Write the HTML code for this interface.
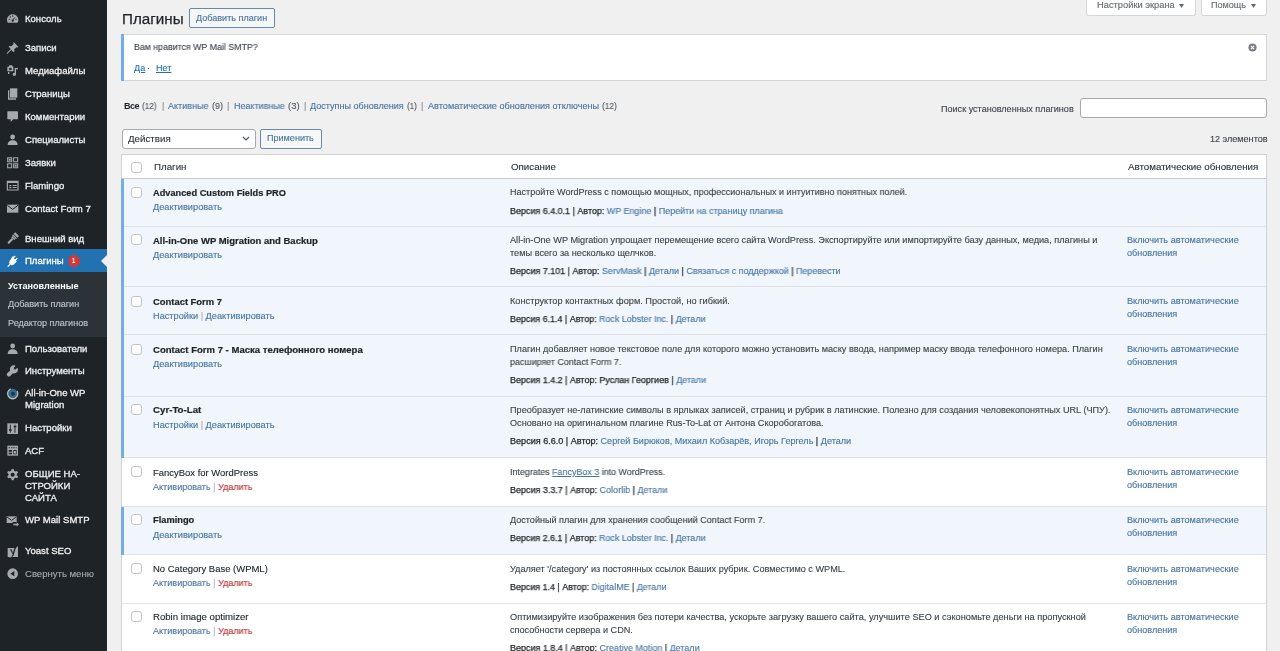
<!DOCTYPE html>
<html><head><meta charset="utf-8"><style>
html,body{margin:0;padding:0;width:1280px;height:651px;overflow:hidden;background:#f0f0f1;}
body{position:relative;font-family:"Liberation Sans",sans-serif;}
.t{position:absolute;white-space:nowrap;will-change:transform;}
a{color:#46739f;text-decoration:none;}
.v{-webkit-text-stroke:0.25px #1d2327;}
.v a{-webkit-text-stroke:0.12px #46739f;}
</style></head><body>
<div style="position:absolute;left:0px;top:0px;width:107px;height:651px;background:#1d2327"></div>
<div style="position:absolute;left:0px;top:249px;width:107px;height:23px;background:#2271b1"></div>
<div style="position:absolute;left:0px;top:272px;width:107px;height:65px;background:#2c3338"></div>
<div style="position:absolute;left:101px;top:255px;width:0;height:0;border-top:6px solid transparent;border-bottom:6px solid transparent;border-right:6px solid #f0f0f1"></div>
<div class="t" style="left:24.50px;top:12.60px;font-size:9.55px;line-height:10.982px;color:#f0f0f1;font-weight:400;-webkit-text-stroke:0.3px currentColor;">Консоль</div>
<svg style="position:absolute;left:5.53px;top:11.73px" width="13.33" height="13.33" viewBox="0 0 20 20"><path fill="#a7aaad" d="M10 3.5C5.3 3.5 1.5 7.3 1.5 12c0 1.6.4 3 1.2 4.3h14.6c.8-1.3 1.2-2.7 1.2-4.3 0-4.7-3.8-8.5-8.5-8.5z"/><circle cx="10" cy="13" r="1.6" fill="#1d2327"/><path d="M10 13 L13 8" stroke="#1d2327" stroke-width="1.3"/><circle cx="5" cy="11" r="1" fill="#1d2327"/><circle cx="6.5" cy="7.5" r="1" fill="#1d2327"/><circle cx="10" cy="6" r="1" fill="#1d2327"/><circle cx="15" cy="11" r="1" fill="#1d2327"/></svg>
<div class="t" style="left:24.50px;top:42.10px;font-size:9.55px;line-height:10.982px;color:#f0f0f1;font-weight:400;-webkit-text-stroke:0.3px currentColor;">Записи</div>
<svg style="position:absolute;left:5.53px;top:41.23px" width="13.33" height="13.33" viewBox="0 0 20 20"><path fill="#a7aaad" d="M11.5 1.5l7 7-1.6 1.1-1.3-.4-3.3 3.3.4 2.9-1.3 1.3-3.3-3.3L2.2 19.3 1 19l.3-1.1 5.9-5.9L4 8.7l1.3-1.3 2.9.4 3.3-3.3-.4-1.4z"/></svg>
<div class="t" style="left:24.50px;top:65.10px;font-size:9.55px;line-height:10.982px;color:#f0f0f1;font-weight:400;-webkit-text-stroke:0.3px currentColor;">Медиафайлы</div>
<svg style="position:absolute;left:5.53px;top:64.23px" width="13.33" height="13.33" viewBox="0 0 20 20"><path fill="#a7aaad" d="M2 4h2l1-2h4l1 2h1v7H2z"/><circle cx="6.5" cy="7.5" r="2" fill="#1d2327"/><path fill="#a7aaad" d="M13 6h5v2h-3v7.5c0 1.4-1.1 2.5-2.5 2.5S10 16.9 10 15.5 11.1 13 12.5 13c.2 0 .3 0 .5.1z"/><path fill="#a7aaad" d="M3 12h2v3H3z"/></svg>
<div class="t" style="left:24.50px;top:88.10px;font-size:9.55px;line-height:10.982px;color:#f0f0f1;font-weight:400;-webkit-text-stroke:0.3px currentColor;">Страницы</div>
<svg style="position:absolute;left:5.53px;top:87.23px" width="13.33" height="13.33" viewBox="0 0 20 20"><path fill="#a7aaad" d="M6 2h11v14H6z"/><path fill="#a7aaad" d="M3 5h2v12h10v2H3z"/></svg>
<div class="t" style="left:24.50px;top:110.90px;font-size:9.55px;line-height:10.982px;color:#f0f0f1;font-weight:400;-webkit-text-stroke:0.3px currentColor;">Комментарии</div>
<svg style="position:absolute;left:5.53px;top:110.03px" width="13.33" height="13.33" viewBox="0 0 20 20"><path fill="#a7aaad" d="M3 2h14c.6 0 1 .4 1 1v10c0 .6-.4 1-1 1h-6l-4 4v-4H3c-.6 0-1-.4-1-1V3c0-.6.4-1 1-1z"/></svg>
<div class="t" style="left:24.50px;top:133.80px;font-size:9.55px;line-height:10.982px;color:#f0f0f1;font-weight:400;-webkit-text-stroke:0.3px currentColor;">Специалисты</div>
<svg style="position:absolute;left:5.53px;top:132.94px" width="13.33" height="13.33" viewBox="0 0 20 20"><circle cx="10" cy="6" r="3.6" fill="#a7aaad"/><path fill="#a7aaad" d="M2.5 18c0-4 3-7 7.5-7s7.5 3 7.5 7z"/></svg>
<div class="t" style="left:24.50px;top:156.60px;font-size:9.55px;line-height:10.982px;color:#f0f0f1;font-weight:400;-webkit-text-stroke:0.3px currentColor;">Заявки</div>
<svg style="position:absolute;left:5.53px;top:155.74px" width="13.33" height="13.33" viewBox="0 0 20 20"><path fill="none" stroke="#a7aaad" stroke-width="1.6" d="M2.5 2.5h6v6h-6zM11.5 2.5h6v6h-6zM2.5 11.5h6v6h-6zM11.5 11.5h6v6h-6z"/><path fill="#a7aaad" d="M4 4h3v3H4zM13 13h3v3h-3z"/></svg>
<div class="t" style="left:24.50px;top:179.60px;font-size:9.55px;line-height:10.982px;color:#f0f0f1;font-weight:400;-webkit-text-stroke:0.3px currentColor;">Flamingo</div>
<svg style="position:absolute;left:5.53px;top:178.74px" width="13.33" height="13.33" viewBox="0 0 20 20"><path fill="none" stroke="#a7aaad" stroke-width="1.8" d="M2 3.5h16v13H2z"/><path fill="#a7aaad" d="M2 3h16v3H2zM5 9h3v2H5zM10 9h6v1.5h-6zM10 12h6v1.5h-6zM5 12h3v2H5z"/></svg>
<div class="t" style="left:24.50px;top:202.60px;font-size:9.55px;line-height:10.982px;color:#f0f0f1;font-weight:400;-webkit-text-stroke:0.3px currentColor;">Contact Form 7</div>
<svg style="position:absolute;left:5.53px;top:201.74px" width="13.33" height="13.33" viewBox="0 0 20 20"><path fill="#a7aaad" d="M1.5 4h17v12h-17z"/><path fill="none" stroke="#1d2327" stroke-width="1.5" d="M2 5l8 6 8-6"/></svg>
<div class="t" style="left:24.50px;top:232.60px;font-size:9.55px;line-height:10.982px;color:#f0f0f1;font-weight:400;-webkit-text-stroke:0.3px currentColor;">Внешний вид</div>
<svg style="position:absolute;left:5.53px;top:231.74px" width="13.33" height="13.33" viewBox="0 0 20 20"><g transform="rotate(45 10 10)"><path fill="#a7aaad" d="M6 0.5h8v6.5H6z"/><path fill="#1d2327" d="M6 4h8v1.1H6z"/><path fill="#a7aaad" d="M7 7.6h6v2.2H7z"/><path fill="#a7aaad" d="M8.4 10.3h3.2v8.2c0 .8-.7 1.5-1.6 1.5s-1.6-.7-1.6-1.5z"/></g></svg>
<div class="t" style="left:24.50px;top:254.80px;font-size:9.55px;line-height:10.982px;color:#fff;font-weight:400;-webkit-text-stroke:0.3px currentColor;">Плагины</div>
<svg style="position:absolute;left:5.53px;top:253.93px" width="13.33" height="13.33" viewBox="0 0 20 20"><path fill="#fff" d="M13.1 2.3l1.4 1.4-2.8 2.8 1.8 1.8 2.8-2.8 1.4 1.4-2.8 2.8 1.4 1.4-4.2 4.2c-1.5 1.5-3.7 1.8-5.4.9l-3.4 3.4-1.4-1.4 3.4-3.4c-.9-1.8-.6-4 .9-5.4L10.4 2.9l1.4 1.4z"/></svg>
<div class="t" style="left:24.50px;top:342.60px;font-size:9.55px;line-height:10.982px;color:#f0f0f1;font-weight:400;-webkit-text-stroke:0.3px currentColor;">Пользователи</div>
<svg style="position:absolute;left:5.53px;top:341.73px" width="13.33" height="13.33" viewBox="0 0 20 20"><circle cx="10" cy="6" r="3.6" fill="#a7aaad"/><path fill="#a7aaad" d="M2.5 18c0-4 3-7 7.5-7s7.5 3 7.5 7z"/></svg>
<div class="t" style="left:24.50px;top:365.10px;font-size:9.55px;line-height:10.982px;color:#f0f0f1;font-weight:400;-webkit-text-stroke:0.3px currentColor;">Инструменты</div>
<svg style="position:absolute;left:5.53px;top:364.23px" width="13.33" height="13.33" viewBox="0 0 20 20"><path fill="#a7aaad" d="M17.5 6.2c-.2-.4-.7-.4-1-.1l-2.3 2.3-2.1-.5-.5-2.1 2.3-2.3c.3-.3.2-.8-.1-1-2.1-.9-4.6-.5-6.3 1.2-1.6 1.6-2 3.9-1.3 5.9L1.8 14c-.9.9-.9 2.4 0 3.3l.9.9c.9.9 2.4.9 3.3 0l4.4-4.4c2 .8 4.3.4 5.9-1.3 1.7-1.7 2.1-4.2 1.2-6.3z"/></svg>
<div class="t" style="left:24.50px;top:387.40px;font-size:9.55px;line-height:10.982px;color:#f0f0f1;font-weight:400;-webkit-text-stroke:0.3px currentColor;">All-in-One WP</div>
<svg style="position:absolute;left:5.53px;top:386.53px" width="13.33" height="13.33" viewBox="0 0 20 20"><circle cx="10" cy="10" r="7.2" fill="#346b8c"/><circle cx="10" cy="10" r="7.6" fill="none" stroke="#b5bcc0" stroke-width="2" stroke-dasharray="36 12" transform="rotate(-30 10 10)"/><circle cx="10.5" cy="10" r="3" fill="#1f3a4c"/></svg>
<div class="t" style="left:24.50px;top:399.20px;font-size:9.55px;line-height:10.982px;color:#f0f0f1;font-weight:400;-webkit-text-stroke:0.3px currentColor;">Migration</div>
<div class="t" style="left:24.50px;top:422.40px;font-size:9.55px;line-height:10.982px;color:#f0f0f1;font-weight:400;-webkit-text-stroke:0.3px currentColor;">Настройки</div>
<svg style="position:absolute;left:5.53px;top:421.53px" width="13.33" height="13.33" viewBox="0 0 20 20"><path fill="#a7aaad" d="M2 2h16v16H2z"/><path fill="none" stroke="#1d2327" stroke-width="1.4" d="M6.5 4v12M13.5 4v12"/><path fill="#1d2327" d="M4.5 11h4v2h-4zM11.5 6h4v2h-4z"/></svg>
<div class="t" style="left:24.50px;top:445.10px;font-size:9.55px;line-height:10.982px;color:#f0f0f1;font-weight:400;-webkit-text-stroke:0.3px currentColor;">ACF</div>
<svg style="position:absolute;left:5.53px;top:444.23px" width="13.33" height="13.33" viewBox="0 0 20 20"><path fill="#a7aaad" d="M2 2.5h16v15H2z"/><path fill="#1d2327" d="M4 5h2v1.5H4zM7.5 5h2v1.5h-2zM11 5h2v1.5h-2zM14.5 5h1.5v1.5h-1.5zM4 9h5v2.5H4zM4 13h5v2.5H4zM11 9h5v6.5h-5z"/><path fill="#a7aaad" d="M12 10.5h3v4h-3z"/></svg>
<div class="t" style="left:24.50px;top:468.40px;font-size:9.55px;line-height:10.982px;color:#f0f0f1;font-weight:400;-webkit-text-stroke:0.3px currentColor;">ОБЩИЕ НА-</div>
<svg style="position:absolute;left:5.53px;top:467.53px" width="13.33" height="13.33" viewBox="0 0 20 20"><g transform="translate(10 10) scale(1.18) translate(-10 -10)"><path fill="#a7aaad" d="M11.3 1.5l.5 2.4c.6.2 1.1.5 1.6.9l2.3-.8 1.3 2.2-1.8 1.6c.1.6.1 1.3 0 1.9l1.8 1.6-1.3 2.2-2.3-.8c-.5.4-1 .7-1.6.9l-.5 2.4H8.7l-.5-2.4c-.6-.2-1.1-.5-1.6-.9l-2.3.8-1.3-2.2 1.8-1.6c-.1-.6-.1-1.3 0-1.9L3 6.2l1.3-2.2 2.3.8c.5-.4 1-.7 1.6-.9l.5-2.4z" transform="translate(0 1.2)"/><circle cx="10" cy="10.2" r="2.6" fill="#1d2327"/></g></svg>
<div class="t" style="left:24.50px;top:480.40px;font-size:9.55px;line-height:10.982px;color:#f0f0f1;font-weight:400;-webkit-text-stroke:0.3px currentColor;">СТРОЙКИ</div>
<div class="t" style="left:24.50px;top:492.20px;font-size:9.55px;line-height:10.982px;color:#f0f0f1;font-weight:400;-webkit-text-stroke:0.3px currentColor;">САЙТА</div>
<div class="t" style="left:24.50px;top:514.40px;font-size:9.55px;line-height:10.982px;color:#f0f0f1;font-weight:400;-webkit-text-stroke:0.3px currentColor;">WP Mail SMTP</div>
<svg style="position:absolute;left:5.53px;top:513.53px" width="13.33" height="13.33" viewBox="0 0 20 20"><path fill="#a7aaad" d="M1 3.5h15v10H1z"/><path fill="none" stroke="#1d2327" stroke-width="1.4" d="M1.5 4.5l7 5 7-5"/><path fill="#1d2327" d="M10 12h10v7H10z"/><path fill="#a7aaad" d="M11 14.5h5v-2l3.5 3.2-3.5 3.2v-2h-5z"/></svg>
<div class="t" style="left:24.50px;top:545.40px;font-size:9.55px;line-height:10.982px;color:#f0f0f1;font-weight:400;-webkit-text-stroke:0.3px currentColor;">Yoast SEO</div>
<svg style="position:absolute;left:5.53px;top:544.53px" width="13.33" height="13.33" viewBox="0 0 20 20"><path fill="#a7aaad" d="M2.5 4.5h12.5l3-3v16.5H7.5l-2 1.5V18H2.5z"/><path fill="#1d2327" d="M6 6.5h2.3l2 5.5 2.3-7.5h2.2l-3.6 11.5c-.3.9-1 1.5-2 1.5H8.5v-1.6h.6c.5 0 .8-.3.9-.7l.2-.7z"/></svg>
<div class="t" style="left:24.50px;top:568.40px;font-size:9.55px;line-height:10.982px;color:#a7aaad;font-weight:400;-webkit-text-stroke:0.12px currentColor;">Свернуть меню</div>
<svg style="position:absolute;left:5.53px;top:566.94px" width="13.33" height="13.33" viewBox="0 0 20 20"><circle cx="10" cy="10" r="8" fill="#a7aaad"/><path fill="#1d2327" d="M12.5 6v8l-6-4z"/></svg>
<div class="t" style="left:8.00px;top:280.64px;font-size:9.07px;line-height:10.431px;color:#fff;font-weight:700;">Установленные</div>
<div class="t" style="left:8.00px;top:299.44px;font-size:9.07px;line-height:10.431px;color:rgba(240,246,252,.7);font-weight:400;-webkit-text-stroke:0.12px currentColor;">Добавить плагин</div>
<div class="t" style="left:8.00px;top:317.64px;font-size:9.07px;line-height:10.431px;color:rgba(240,246,252,.7);font-weight:400;-webkit-text-stroke:0.12px currentColor;">Редактор плагинов</div>
<div style="position:absolute;left:67.5px;top:255px;width:12px;height:12px;border-radius:6px;background:#d63638;color:#fff;font-size:6.5px;line-height:12px;text-align:center;font-weight:700;font-family:'Liberation Sans'">1</div>
<div style="position:absolute;left:1085.5px;top:-5px;width:110px;height:20.5px;background:#fff;border:1px solid #d5d6d8;border-top:none;border-radius:0 0 3px 3px;box-sizing:border-box"></div>
<div class="t" id="e1" style="left:1096.60px;top:-0.46px;font-size:9.07px;line-height:10.431px;color:#646970;font-weight:400;-webkit-text-stroke:0.12px currentColor;transform:scaleX(1.0281);transform-origin:0 0;">Настройки экрана</div>
<svg style="position:absolute;left:1179.3px;top:4px" width="5" height="4" viewBox="0 0 5 4"><path d="M0 0h5L2.5 4z" fill="#646970"/></svg>
<div style="position:absolute;left:1200.5px;top:-5px;width:66px;height:20.5px;background:#fff;border:1px solid #d5d6d8;border-top:none;border-radius:0 0 3px 3px;box-sizing:border-box"></div>
<div class="t" style="left:1211.00px;top:-0.46px;font-size:9.07px;line-height:10.431px;color:#646970;font-weight:400;-webkit-text-stroke:0.12px currentColor;">Помощь</div>
<svg style="position:absolute;left:1251px;top:4px" width="5" height="4" viewBox="0 0 5 4"><path d="M0 0h5L2.5 4z" fill="#646970"/></svg>
<div class="t" style="left:122.40px;top:10.09px;font-size:15.2px;line-height:17.48px;color:#1d2327;font-weight:400;-webkit-text-stroke:0.25px currentColor;">Плагины</div>
<div style="position:absolute;left:189px;top:8px;width:86px;height:20px;background:#f6f7f7;border:1px solid #6a86a8;border-radius:2px;box-sizing:border-box"></div>
<div class="t" style="left:196.00px;top:13.04px;font-size:9.07px;line-height:10.431px;color:#46739f;font-weight:400;-webkit-text-stroke:0.12px currentColor;">Добавить плагин</div>
<div style="position:absolute;left:121px;top:34px;width:1146px;height:46.5px;background:#fff;border:1px solid #d5d6d8;box-sizing:border-box"></div>
<div style="position:absolute;left:121px;top:34px;width:3px;height:46.5px;background:#72aee6"></div>
<div class="t" id="e2" style="left:133.60px;top:41.94px;font-size:9.07px;line-height:10.431px;color:#3c434a;font-weight:400;-webkit-text-stroke:0.12px currentColor;transform:scaleX(0.9732);transform-origin:0 0;">Вам нравится WP Mail SMTP?</div>
<div class="t" style="left:133.60px;top:62.54px;font-size:9.07px;line-height:10.431px;color:#3c434a;font-weight:400;-webkit-text-stroke:0.12px currentColor;"><span style="text-decoration:underline;color:#2271b1">Да</span></div>
<div class="t" style="left:147.40px;top:62.54px;font-size:9.07px;line-height:10.431px;color:#3c434a;font-weight:400;-webkit-text-stroke:0.12px currentColor;">·</div>
<div class="t" style="left:155.80px;top:62.54px;font-size:9.07px;line-height:10.431px;color:#3c434a;font-weight:400;-webkit-text-stroke:0.12px currentColor;"><span style="text-decoration:underline;color:#2271b1">Нет</span></div>
<svg style="position:absolute;left:1248.4px;top:43.4px" width="9" height="9" viewBox="0 0 20 20"><circle cx="10" cy="10" r="9" fill="#787c82"/><path d="M6.5 6.5 L13.5 13.5 M13.5 6.5 L6.5 13.5" stroke="#fff" stroke-width="2.8"/></svg>
<div class="t" style="left:123.60px;top:100.54px;font-size:9.07px;line-height:10.431px;color:#1d2327;font-weight:700;letter-spacing:-0.55px;">Все</div>
<div class="t" id="e3" style="left:142.20px;top:100.54px;font-size:9.07px;line-height:10.431px;color:#50575e;font-weight:400;-webkit-text-stroke:0.12px currentColor;transform:scaleX(0.9054);transform-origin:0 0;">(12)</div>
<div class="t" style="left:161.90px;top:100.54px;font-size:9.07px;line-height:10.431px;color:#8c8f94;font-weight:400;-webkit-text-stroke:0.12px currentColor;">|</div>
<div class="t" id="e4" style="left:168.00px;top:100.54px;font-size:9.07px;line-height:10.431px;color:#46739f;font-weight:400;-webkit-text-stroke:0.12px currentColor;transform:scaleX(0.9926);transform-origin:0 0;">Активные</div>
<div class="t" id="e5" style="left:211.70px;top:100.54px;font-size:9.07px;line-height:10.431px;color:#50575e;font-weight:400;-webkit-text-stroke:0.12px currentColor;transform:scaleX(1.0020);transform-origin:0 0;">(9)</div>
<div class="t" style="left:227.30px;top:100.54px;font-size:9.07px;line-height:10.431px;color:#8c8f94;font-weight:400;-webkit-text-stroke:0.12px currentColor;">|</div>
<div class="t" id="e6" style="left:233.80px;top:100.54px;font-size:9.07px;line-height:10.431px;color:#46739f;font-weight:400;-webkit-text-stroke:0.12px currentColor;transform:scaleX(0.9887);transform-origin:0 0;">Неактивные</div>
<div class="t" id="e7" style="left:287.50px;top:100.54px;font-size:9.07px;line-height:10.431px;color:#50575e;font-weight:400;-webkit-text-stroke:0.12px currentColor;transform:scaleX(1.0471);transform-origin:0 0;">(3)</div>
<div class="t" style="left:303.80px;top:100.54px;font-size:9.07px;line-height:10.431px;color:#8c8f94;font-weight:400;-webkit-text-stroke:0.12px currentColor;">|</div>
<div class="t" id="e8" style="left:310.00px;top:100.54px;font-size:9.07px;line-height:10.431px;color:#46739f;font-weight:400;-webkit-text-stroke:0.12px currentColor;transform:scaleX(0.9991);transform-origin:0 0;">Доступны обновления</div>
<div class="t" id="e9" style="left:406.75px;top:100.54px;font-size:9.07px;line-height:10.431px;color:#50575e;font-weight:400;-webkit-text-stroke:0.12px currentColor;transform:scaleX(0.8937);transform-origin:0 0;">(1)</div>
<div class="t" style="left:421.40px;top:100.54px;font-size:9.07px;line-height:10.431px;color:#8c8f94;font-weight:400;-webkit-text-stroke:0.12px currentColor;">|</div>
<div class="t" id="e10" style="left:427.50px;top:100.54px;font-size:9.07px;line-height:10.431px;color:#46739f;font-weight:400;-webkit-text-stroke:0.12px currentColor;transform:scaleX(1.0077);transform-origin:0 0;">Автоматические обновления отключены</div>
<div class="t" id="e11" style="left:601.75px;top:100.54px;font-size:9.07px;line-height:10.431px;color:#50575e;font-weight:400;-webkit-text-stroke:0.12px currentColor;transform:scaleX(0.9240);transform-origin:0 0;">(12)</div>
<div class="t" style="left:940.90px;top:103.94px;font-size:9.07px;line-height:10.431px;color:#3c434a;font-weight:400;-webkit-text-stroke:0.12px currentColor;">Поиск установленных плагинов</div>
<div style="position:absolute;left:1080px;top:98px;width:187px;height:20px;background:#fff;border:1px solid #a7aaad;border-radius:3px;box-sizing:border-box"></div>
<div style="position:absolute;left:122px;top:129px;width:134px;height:19.5px;background:#fff;border:1px solid #a7aaad;border-radius:3px;box-sizing:border-box"></div>
<div class="t" style="left:128.20px;top:133.02px;font-size:9.75px;line-height:11.212px;color:#2c3338;font-weight:400;-webkit-text-stroke:0.12px currentColor;">Действия</div>
<svg style="position:absolute;left:241.5px;top:135px" width="8" height="7" viewBox="0 0 8 7"><path d="M1 2 L4 5 L7 2" fill="none" stroke="#50575e" stroke-width="1.2"/></svg>
<div style="position:absolute;left:259.5px;top:129px;width:62px;height:19.5px;background:#f6f7f7;border:1px solid #6a86a8;border-radius:2px;box-sizing:border-box"></div>
<div class="t" style="left:267.30px;top:133.44px;font-size:9.07px;line-height:10.431px;color:#46739f;font-weight:400;-webkit-text-stroke:0.12px currentColor;">Применить</div>
<div class="t" style="left:1210.00px;top:134.04px;font-size:9.07px;line-height:10.431px;color:#3c434a;font-weight:400;-webkit-text-stroke:0.12px currentColor;">12 элементов</div>
<div style="position:absolute;left:121px;top:154px;width:1146px;height:520px;background:#fff;border:1px solid #d0d1d4;box-sizing:border-box"></div>
<div style="position:absolute;left:121px;top:178px;width:1146px;height:1px;background:#c8c9cc"></div>
<div style="position:absolute;left:131px;top:162px;width:11px;height:11px;background:#fff;border:1px solid #c3c4c7;border-radius:3px;box-sizing:border-box"></div>
<div class="t" style="left:153.70px;top:160.92px;font-size:9.75px;line-height:11.212px;color:#2c3338;font-weight:400;-webkit-text-stroke:0.12px currentColor;">Плагин</div>
<div class="t" style="left:510.60px;top:160.92px;font-size:9.75px;line-height:11.212px;color:#2c3338;font-weight:400;-webkit-text-stroke:0.12px currentColor;">Описание</div>
<div class="t" style="left:1127.70px;top:160.92px;font-size:9.75px;line-height:11.212px;color:#2c3338;font-weight:400;-webkit-text-stroke:0.12px currentColor;">Автоматические обновления</div>
<div style="position:absolute;left:122px;top:179px;width:1144px;height:48px;background:#f0f6fc"></div>
<div style="position:absolute;left:122px;top:226px;width:1144px;height:1px;background:#e1e2e4"></div>
<div style="position:absolute;left:121px;top:179px;width:3px;height:48px;background:#72aee6"></div>
<div style="position:absolute;left:131px;top:186.49999999999997px;width:11px;height:11px;background:#fff;border:1px solid #c3c4c7;border-radius:3px;box-sizing:border-box"></div>
<div class="t" id="e12" style="left:152.90px;top:187.87px;font-size:9.15px;line-height:10.522px;color:#1d2327;font-weight:700;-webkit-text-stroke:0.2px currentColor;transform:scaleX(1.0120);transform-origin:0 0;">Advanced Custom Fields PRO</div>
<div class="t" id="e13" style="left:152.90px;top:202.04px;font-size:9.07px;line-height:10.431px;color:#3c434a;font-weight:400;-webkit-text-stroke:0.12px currentColor;transform:scaleX(1.0163);transform-origin:0 0;"><span style="color:#46739f">Деактивировать</span></div>
<div class="t" id="e14" style="left:510.10px;top:187.04px;font-size:9.07px;line-height:10.431px;color:#3c434a;font-weight:400;-webkit-text-stroke:0.12px currentColor;transform:scaleX(0.9996);transform-origin:0 0;">Настройте WordPress с помощью мощных, профессиональных и интуитивно понятных полей.</div>
<div class="t" id="e15" style="left:510.10px;top:205.84px;font-size:9.07px;line-height:10.431px;color:#1d2327;font-weight:400;transform:scaleX(0.9871);transform-origin:0 0;"><span class="v">Версия 6.4.0.1 | Автор: <a>WP Engine</a> | <a>Перейти на страницу плагина</a></span></div>
<div style="position:absolute;left:122px;top:227px;width:1144px;height:60px;background:#f0f6fc"></div>
<div style="position:absolute;left:122px;top:286px;width:1144px;height:1px;background:#e1e2e4"></div>
<div style="position:absolute;left:121px;top:227px;width:3px;height:60px;background:#72aee6"></div>
<div style="position:absolute;left:131px;top:234.39999999999998px;width:11px;height:11px;background:#fff;border:1px solid #c3c4c7;border-radius:3px;box-sizing:border-box"></div>
<div class="t" id="e16" style="left:152.90px;top:235.77px;font-size:9.15px;line-height:10.522px;color:#1d2327;font-weight:700;-webkit-text-stroke:0.2px currentColor;transform:scaleX(1.0396);transform-origin:0 0;">All-in-One WP Migration and Backup</div>
<div class="t" id="e17" style="left:152.90px;top:249.94px;font-size:9.07px;line-height:10.431px;color:#3c434a;font-weight:400;-webkit-text-stroke:0.12px currentColor;transform:scaleX(1.0163);transform-origin:0 0;"><span style="color:#46739f">Деактивировать</span></div>
<div class="t" id="e18" style="left:510.10px;top:235.04px;font-size:9.07px;line-height:10.431px;color:#3c434a;font-weight:400;-webkit-text-stroke:0.12px currentColor;transform:scaleX(1.0103);transform-origin:0 0;">All-in-One WP Migration упрощает перемещение всего сайта WordPress. Экспортируйте или импортируйте базу данных, медиа, плагины и</div>
<div class="t" id="e19" style="left:510.10px;top:247.94px;font-size:9.07px;line-height:10.431px;color:#3c434a;font-weight:400;-webkit-text-stroke:0.12px currentColor;transform:scaleX(1.0119);transform-origin:0 0;">темы всего за несколько щелчков.</div>
<div class="t" id="e20" style="left:510.10px;top:265.84px;font-size:9.07px;line-height:10.431px;color:#1d2327;font-weight:400;transform:scaleX(0.9878);transform-origin:0 0;"><span class="v">Версия 7.101 | Автор: <a>ServMask</a> | <a>Детали</a> | <a>Связаться с поддержкой</a> | <a>Перевести</a></span></div>
<div class="t" id="e21" style="left:1127.00px;top:235.44px;font-size:9.07px;line-height:10.431px;color:#46739f;font-weight:400;-webkit-text-stroke:0.12px currentColor;transform:scaleX(1.0112);transform-origin:0 0;">Включить автоматические</div>
<div class="t" style="left:1127.00px;top:248.24px;font-size:9.07px;line-height:10.431px;color:#46739f;font-weight:400;-webkit-text-stroke:0.12px currentColor;">обновления</div>
<div style="position:absolute;left:122px;top:287px;width:1144px;height:48px;background:#f0f6fc"></div>
<div style="position:absolute;left:122px;top:334px;width:1144px;height:1px;background:#e1e2e4"></div>
<div style="position:absolute;left:121px;top:287px;width:3px;height:48px;background:#72aee6"></div>
<div style="position:absolute;left:131px;top:295.6px;width:11px;height:11px;background:#fff;border:1px solid #c3c4c7;border-radius:3px;box-sizing:border-box"></div>
<div class="t" id="e22" style="left:152.90px;top:296.97px;font-size:9.15px;line-height:10.522px;color:#1d2327;font-weight:700;-webkit-text-stroke:0.2px currentColor;transform:scaleX(1.0308);transform-origin:0 0;">Contact Form 7</div>
<div class="t" id="e23" style="left:152.90px;top:311.14px;font-size:9.07px;line-height:10.431px;color:#3c434a;font-weight:400;-webkit-text-stroke:0.12px currentColor;transform:scaleX(1.0146);transform-origin:0 0;"><span style="color:#46739f">Настройки</span> <span style="color:#a7aaad">|</span> <span style="color:#46739f">Деактивировать</span></div>
<div class="t" id="e24" style="left:510.10px;top:295.84px;font-size:9.07px;line-height:10.431px;color:#3c434a;font-weight:400;-webkit-text-stroke:0.12px currentColor;transform:scaleX(1.0179);transform-origin:0 0;">Конструктор контактных форм. Простой, но гибкий.</div>
<div class="t" id="e25" style="left:510.10px;top:313.74px;font-size:9.07px;line-height:10.431px;color:#1d2327;font-weight:400;transform:scaleX(0.9836);transform-origin:0 0;"><span class="v">Версия 6.1.4 | Автор: <a>Rock Lobster Inc.</a> | <a>Детали</a></span></div>
<div class="t" id="e26" style="left:1127.00px;top:295.84px;font-size:9.07px;line-height:10.431px;color:#46739f;font-weight:400;-webkit-text-stroke:0.12px currentColor;transform:scaleX(1.0112);transform-origin:0 0;">Включить автоматические</div>
<div class="t" style="left:1127.00px;top:308.64px;font-size:9.07px;line-height:10.431px;color:#46739f;font-weight:400;-webkit-text-stroke:0.12px currentColor;">обновления</div>
<div style="position:absolute;left:122px;top:335px;width:1144px;height:62px;background:#f0f6fc"></div>
<div style="position:absolute;left:122px;top:396px;width:1144px;height:1px;background:#e1e2e4"></div>
<div style="position:absolute;left:121px;top:335px;width:3px;height:62px;background:#72aee6"></div>
<div style="position:absolute;left:131px;top:343.8px;width:11px;height:11px;background:#fff;border:1px solid #c3c4c7;border-radius:3px;box-sizing:border-box"></div>
<div class="t" id="e27" style="left:152.90px;top:345.17px;font-size:9.15px;line-height:10.522px;color:#1d2327;font-weight:700;-webkit-text-stroke:0.2px currentColor;transform:scaleX(1.0452);transform-origin:0 0;">Contact Form 7 - Маска телефонного номера</div>
<div class="t" id="e28" style="left:152.90px;top:359.04px;font-size:9.07px;line-height:10.431px;color:#3c434a;font-weight:400;-webkit-text-stroke:0.12px currentColor;transform:scaleX(1.0163);transform-origin:0 0;"><span style="color:#46739f">Деактивировать</span></div>
<div class="t" id="e29" style="left:510.10px;top:343.74px;font-size:9.07px;line-height:10.431px;color:#3c434a;font-weight:400;-webkit-text-stroke:0.12px currentColor;transform:scaleX(1.0082);transform-origin:0 0;">Плагин добавляет новое текстовое поле для которого можно установить маску ввода, например маску ввода телефонного номера. Плагин</div>
<div class="t" id="e30" style="left:510.10px;top:356.64px;font-size:9.07px;line-height:10.431px;color:#3c434a;font-weight:400;-webkit-text-stroke:0.12px currentColor;transform:scaleX(0.9843);transform-origin:0 0;">расширяет Contact Form 7.</div>
<div class="t" id="e31" style="left:510.10px;top:375.14px;font-size:9.07px;line-height:10.431px;color:#1d2327;font-weight:400;transform:scaleX(0.9867);transform-origin:0 0;"><span class="v">Версия 1.4.2 | Автор: Руслан Георгиев | <a>Детали</a></span></div>
<div class="t" id="e32" style="left:1127.00px;top:343.74px;font-size:9.07px;line-height:10.431px;color:#46739f;font-weight:400;-webkit-text-stroke:0.12px currentColor;transform:scaleX(1.0112);transform-origin:0 0;">Включить автоматические</div>
<div class="t" style="left:1127.00px;top:356.54px;font-size:9.07px;line-height:10.431px;color:#46739f;font-weight:400;-webkit-text-stroke:0.12px currentColor;">обновления</div>
<div style="position:absolute;left:122px;top:397px;width:1144px;height:61px;background:#f0f6fc"></div>
<div style="position:absolute;left:122px;top:457px;width:1144px;height:1px;background:#e1e2e4"></div>
<div style="position:absolute;left:121px;top:397px;width:3px;height:61px;background:#72aee6"></div>
<div style="position:absolute;left:131px;top:404.1px;width:11px;height:11px;background:#fff;border:1px solid #c3c4c7;border-radius:3px;box-sizing:border-box"></div>
<div class="t" id="e33" style="left:152.90px;top:405.47px;font-size:9.15px;line-height:10.522px;color:#1d2327;font-weight:700;-webkit-text-stroke:0.2px currentColor;transform:scaleX(1.0626);transform-origin:0 0;">Cyr-To-Lat</div>
<div class="t" id="e34" style="left:152.90px;top:419.84px;font-size:9.07px;line-height:10.431px;color:#3c434a;font-weight:400;-webkit-text-stroke:0.12px currentColor;transform:scaleX(1.0146);transform-origin:0 0;"><span style="color:#46739f">Настройки</span> <span style="color:#a7aaad">|</span> <span style="color:#46739f">Деактивировать</span></div>
<div class="t" id="e35" style="left:510.10px;top:404.84px;font-size:9.07px;line-height:10.431px;color:#3c434a;font-weight:400;-webkit-text-stroke:0.12px currentColor;transform:scaleX(1.0082);transform-origin:0 0;">Преобразует не-латинские символы в ярлыках записей, страниц и рубрик в латинские. Полезно для создания человекопонятных URL (ЧПУ).</div>
<div class="t" id="e36" style="left:510.10px;top:417.74px;font-size:9.07px;line-height:10.431px;color:#3c434a;font-weight:400;-webkit-text-stroke:0.12px currentColor;transform:scaleX(1.0072);transform-origin:0 0;">Основано на оригинальном плагине Rus-To-Lat от Антона Скоробогатова.</div>
<div class="t" id="e37" style="left:510.10px;top:435.94px;font-size:9.07px;line-height:10.431px;color:#1d2327;font-weight:400;transform:scaleX(1.0004);transform-origin:0 0;"><span class="v">Версия 6.6.0 | Автор: <a>Сергей Бирюков, Михаил Кобзарёв, Игорь Гергель</a> | <a>Детали</a></span></div>
<div class="t" id="e38" style="left:1127.00px;top:405.14px;font-size:9.07px;line-height:10.431px;color:#46739f;font-weight:400;-webkit-text-stroke:0.12px currentColor;transform:scaleX(1.0112);transform-origin:0 0;">Включить автоматические</div>
<div class="t" style="left:1127.00px;top:417.94px;font-size:9.07px;line-height:10.431px;color:#46739f;font-weight:400;-webkit-text-stroke:0.12px currentColor;">обновления</div>
<div style="position:absolute;left:122px;top:506px;width:1144px;height:1px;background:#e1e2e4"></div>
<div style="position:absolute;left:131px;top:466.2px;width:11px;height:11px;background:#fff;border:1px solid #c3c4c7;border-radius:3px;box-sizing:border-box"></div>
<div class="t" id="e39" style="left:152.90px;top:467.64px;font-size:9.07px;line-height:10.431px;color:#1d2327;font-weight:400;-webkit-text-stroke:0.12px currentColor;transform:scaleX(1.0431);transform-origin:0 0;">FancyBox for WordPress</div>
<div class="t" id="e40" style="left:152.90px;top:481.94px;font-size:9.07px;line-height:10.431px;color:#3c434a;font-weight:400;-webkit-text-stroke:0.12px currentColor;transform:scaleX(0.9965);transform-origin:0 0;"><span style="color:#46739f">Активировать</span> <span style="color:#a7aaad">|</span> <span style="color:#b32d2e">Удалить</span></div>
<div class="t" id="e41" style="left:510.10px;top:466.94px;font-size:9.07px;line-height:10.431px;color:#3c434a;font-weight:400;-webkit-text-stroke:0.12px currentColor;transform:scaleX(0.9840);transform-origin:0 0;">Integrates <a style="text-decoration:underline">FancyBox 3</a> into WordPress.</div>
<div class="t" id="e42" style="left:510.10px;top:484.84px;font-size:9.07px;line-height:10.431px;color:#1d2327;font-weight:400;transform:scaleX(0.9901);transform-origin:0 0;"><span class="v">Версия 3.3.7 | Автор: <a>Colorlib</a> | <a>Детали</a></span></div>
<div class="t" id="e43" style="left:1127.00px;top:466.94px;font-size:9.07px;line-height:10.431px;color:#46739f;font-weight:400;-webkit-text-stroke:0.12px currentColor;transform:scaleX(1.0112);transform-origin:0 0;">Включить автоматические</div>
<div class="t" style="left:1127.00px;top:479.74px;font-size:9.07px;line-height:10.431px;color:#46739f;font-weight:400;-webkit-text-stroke:0.12px currentColor;">обновления</div>
<div style="position:absolute;left:122px;top:507px;width:1144px;height:48px;background:#f0f6fc"></div>
<div style="position:absolute;left:122px;top:554px;width:1144px;height:1px;background:#e1e2e4"></div>
<div style="position:absolute;left:121px;top:507px;width:3px;height:48px;background:#72aee6"></div>
<div style="position:absolute;left:131px;top:514.1px;width:11px;height:11px;background:#fff;border:1px solid #c3c4c7;border-radius:3px;box-sizing:border-box"></div>
<div class="t" id="e44" style="left:152.90px;top:515.47px;font-size:9.15px;line-height:10.522px;color:#1d2327;font-weight:700;-webkit-text-stroke:0.2px currentColor;transform:scaleX(1.0182);transform-origin:0 0;">Flamingo</div>
<div class="t" id="e45" style="left:152.90px;top:529.84px;font-size:9.07px;line-height:10.431px;color:#3c434a;font-weight:400;-webkit-text-stroke:0.12px currentColor;transform:scaleX(1.0163);transform-origin:0 0;"><span style="color:#46739f">Деактивировать</span></div>
<div class="t" id="e46" style="left:510.10px;top:515.04px;font-size:9.07px;line-height:10.431px;color:#3c434a;font-weight:400;-webkit-text-stroke:0.12px currentColor;transform:scaleX(0.9994);transform-origin:0 0;">Достойный плагин для хранения сообщений Contact Form 7.</div>
<div class="t" id="e47" style="left:510.10px;top:533.04px;font-size:9.07px;line-height:10.431px;color:#1d2327;font-weight:400;transform:scaleX(0.9836);transform-origin:0 0;"><span class="v">Версия 2.6.1 | Автор: <a>Rock Lobster Inc.</a> | <a>Детали</a></span></div>
<div class="t" id="e48" style="left:1127.00px;top:515.04px;font-size:9.07px;line-height:10.431px;color:#46739f;font-weight:400;-webkit-text-stroke:0.12px currentColor;transform:scaleX(1.0112);transform-origin:0 0;">Включить автоматические</div>
<div class="t" style="left:1127.00px;top:527.84px;font-size:9.07px;line-height:10.431px;color:#46739f;font-weight:400;-webkit-text-stroke:0.12px currentColor;">обновления</div>
<div style="position:absolute;left:122px;top:603px;width:1144px;height:1px;background:#e1e2e4"></div>
<div style="position:absolute;left:131px;top:563.0000000000001px;width:11px;height:11px;background:#fff;border:1px solid #c3c4c7;border-radius:3px;box-sizing:border-box"></div>
<div class="t" id="e49" style="left:152.90px;top:564.44px;font-size:9.07px;line-height:10.431px;color:#1d2327;font-weight:400;-webkit-text-stroke:0.12px currentColor;transform:scaleX(1.0456);transform-origin:0 0;">No Category Base (WPML)</div>
<div class="t" id="e50" style="left:152.90px;top:578.44px;font-size:9.07px;line-height:10.431px;color:#3c434a;font-weight:400;-webkit-text-stroke:0.12px currentColor;transform:scaleX(0.9965);transform-origin:0 0;"><span style="color:#46739f">Активировать</span> <span style="color:#a7aaad">|</span> <span style="color:#b32d2e">Удалить</span></div>
<div class="t" id="e51" style="left:510.10px;top:564.14px;font-size:9.07px;line-height:10.431px;color:#3c434a;font-weight:400;-webkit-text-stroke:0.12px currentColor;transform:scaleX(1.0081);transform-origin:0 0;">Удаляет '/category' из постоянных ссылок Ваших рубрик. Совместимо с WPML.</div>
<div class="t" id="e52" style="left:510.10px;top:581.84px;font-size:9.07px;line-height:10.431px;color:#1d2327;font-weight:400;transform:scaleX(0.9814);transform-origin:0 0;"><span class="v">Версия 1.4 | Автор: <a>DigitalME</a> | <a>Детали</a></span></div>
<div class="t" id="e53" style="left:1127.00px;top:564.14px;font-size:9.07px;line-height:10.431px;color:#46739f;font-weight:400;-webkit-text-stroke:0.12px currentColor;transform:scaleX(1.0112);transform-origin:0 0;">Включить автоматические</div>
<div class="t" style="left:1127.00px;top:576.94px;font-size:9.07px;line-height:10.431px;color:#46739f;font-weight:400;-webkit-text-stroke:0.12px currentColor;">обновления</div>
<div style="position:absolute;left:122px;top:699px;width:1144px;height:1px;background:#e1e2e4"></div>
<div style="position:absolute;left:131px;top:610.9000000000001px;width:11px;height:11px;background:#fff;border:1px solid #c3c4c7;border-radius:3px;box-sizing:border-box"></div>
<div class="t" id="e54" style="left:152.90px;top:612.34px;font-size:9.07px;line-height:10.431px;color:#1d2327;font-weight:400;-webkit-text-stroke:0.12px currentColor;transform:scaleX(1.0591);transform-origin:0 0;">Robin image optimizer</div>
<div class="t" id="e55" style="left:152.90px;top:626.14px;font-size:9.07px;line-height:10.431px;color:#3c434a;font-weight:400;-webkit-text-stroke:0.12px currentColor;transform:scaleX(0.9965);transform-origin:0 0;"><span style="color:#46739f">Активировать</span> <span style="color:#a7aaad">|</span> <span style="color:#b32d2e">Удалить</span></div>
<div class="t" id="e56" style="left:510.10px;top:611.94px;font-size:9.07px;line-height:10.431px;color:#3c434a;font-weight:400;-webkit-text-stroke:0.12px currentColor;transform:scaleX(1.0151);transform-origin:0 0;">Оптимизируйте изображения без потери качества, ускорьте загрузку вашего сайта, улучшите SEO и сэкономьте деньги на пропускной</div>
<div class="t" id="e57" style="left:510.10px;top:624.84px;font-size:9.07px;line-height:10.431px;color:#3c434a;font-weight:400;-webkit-text-stroke:0.12px currentColor;transform:scaleX(1.0037);transform-origin:0 0;">способности сервера и CDN.</div>
<div class="t" id="e58" style="left:510.10px;top:643.24px;font-size:9.07px;line-height:10.431px;color:#1d2327;font-weight:400;transform:scaleX(0.9890);transform-origin:0 0;"><span class="v">Версия 1.8.4 | Автор: <a>Creative Motion</a> | <a>Детали</a></span></div>
<div class="t" id="e59" style="left:1127.00px;top:611.94px;font-size:9.07px;line-height:10.431px;color:#46739f;font-weight:400;-webkit-text-stroke:0.12px currentColor;transform:scaleX(1.0112);transform-origin:0 0;">Включить автоматические</div>
<div class="t" style="left:1127.00px;top:624.74px;font-size:9.07px;line-height:10.431px;color:#46739f;font-weight:400;-webkit-text-stroke:0.12px currentColor;">обновления</div>
</body></html>
